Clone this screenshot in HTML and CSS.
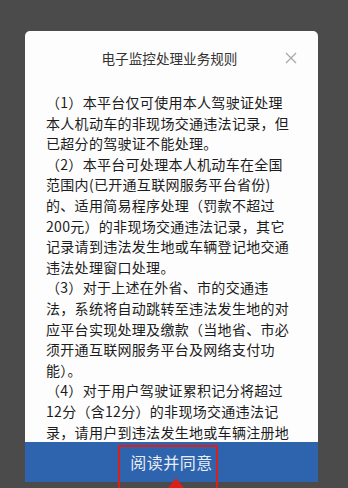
FILE: index.html
```html
<!DOCTYPE html>
<html lang="zh-CN">
<head>
<meta charset="utf-8">
<title>电子监控处理业务规则</title>
<link rel="stylesheet" href="styles.css">
</head>
<body>
<div class="screen">
  <div class="modal">
    <div class="header">
      <span class="title">电子监控处理业务规则</span>
      <svg class="close" width="12" height="12" viewBox="0 0 12 12"><path d="M1 1L11 11M11 1L1 11" stroke="#a8a8a8" stroke-width="1.3" fill="none"/></svg>
    </div>
    <div class="content">
      <span class="ln">（1）本平台仅可使用本人驾驶证处理</span>
      <span class="ln">本人机动车的非现场交通违法记录，但</span>
      <span class="ln">已超分的驾驶证不能处理。</span>
      <span class="ln">（2）本平台可处理本人机动车在全国</span>
      <span class="ln">范围内(已开通互联网服务平台省份)</span>
      <span class="ln">的、适用简易程序处理（罚款不超过</span>
      <span class="ln">200元）的非现场交通违法记录，其它</span>
      <span class="ln">记录请到违法发生地或车辆登记地交通</span>
      <span class="ln">违法处理窗口处理。</span>
      <span class="ln">（3）对于上述在外省、市的交通违</span>
      <span class="ln">法，系统将自动跳转至违法发生地的对</span>
      <span class="ln">应平台实现处理及缴款（当地省、市必</span>
      <span class="ln">须开通互联网服务平台及网络支付功</span>
      <span class="ln">能）。</span>
      <span class="ln">（4）对于用户驾驶证累积记分将超过</span>
      <span class="ln">12分（含12分）的非现场交通违法记</span>
      <span class="ln">录，请用户到违法发生地或车辆注册地</span>
    </div>
    <div class="footer">阅读并同意</div>
  </div>
  <div class="mark"></div>
  <svg class="arrow" width="24" height="14" viewBox="0 0 24 14"><path d="M12 2L4 12H20Z" fill="#d8201f"/></svg>
</div>
</body>
</html>
```
FILE: styles.css
```css
html, body {
  margin: 0;
  padding: 0;
}
body {
  background: #4b4b4b;
  font-family: "Noto Sans CJK SC", "Noto Sans", sans-serif;
}
.screen {
  position: relative;
  width: 348px;
  height: 488px;
  overflow: hidden;
  padding-top: 31px;
  box-sizing: border-box;
}
.modal {
  margin-left: 25px;
  width: 293px;
  height: 451px;
  background: #fdfdfd;
  border-radius: 5px 5px 0 0;
  display: flex;
  flex-direction: column;
  overflow: hidden;
}
.header {
  position: relative;
  height: 54px;
  flex: none;
  display: flex;
  align-items: center;
  justify-content: center;
}
.title {
  font-size: 13.6px;
  color: #333;
  margin-left: -4px;
}
.close {
  position: absolute;
  right: 21px;
  top: 21px;
}
.content {
  flex: 1;
  overflow: hidden;
  padding: 7px 0 0 21px;
  font-size: 14px;
  letter-spacing: 0.3px;
  line-height: 20.6px;
  color: #1c1c1c;
}
.ln {
  display: block;
  white-space: nowrap;
}
.footer {
  flex: none;
  height: 40px;
  background: #2e63ad;
  color: #e8eef8;
  font-size: 16px;
  display: flex;
  align-items: center;
  justify-content: center;
  letter-spacing: 0.5px;
}
.mark {
  position: absolute;
  left: 118px;
  top: 445px;
  width: 96px;
  height: 60px;
  border: 2px solid #d8201f;
}
.arrow {
  position: absolute;
  left: 164px;
  top: 476px;
}
```
